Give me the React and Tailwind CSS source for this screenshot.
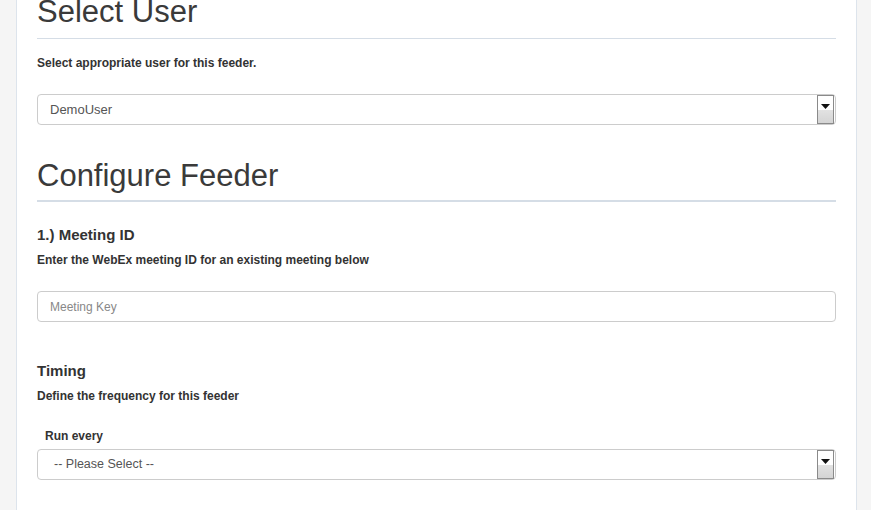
const font = { fontFamily: '"Liberation Sans", Arial, sans-serif' }

function SelectBox({ value, textClass = 'pl-[12px] text-[12.5px]' }) {
  return (
    <div className="h-[31px] border border-[#cccccc] rounded-[4px] bg-white flex items-center justify-between pr-[1px]">
      <span className={`text-[#555555] ${textClass}`}>{value}</span>
      <div className="w-[17px] h-[29px] border border-[#8a8a8a] flex flex-col">
        <div className="h-1/2 bg-white flex items-end justify-center pb-[1px]">
          <svg width="9" height="5" viewBox="0 0 9 5">
            <path d="M0 0h9L4.5 5z" fill="#111" />
          </svg>
        </div>
        <div className="h-1/2 bg-gradient-to-b from-[#e2e2e2] to-[#d4d4d4]" />
      </div>
    </div>
  )
}

export default function App() {
  return (
    <div className="w-[871px] h-[510px] flex overflow-hidden bg-[#f5f5f5]" style={font}>
      <div className="w-[17px] border-r border-[#dde4ec]" />
      <div className="w-[840px] bg-white border-r border-[#dde4ec] px-[20px] text-[#333333]">
        <div className="mt-[-5px] pb-[10px] border-b border-[#d5dde6]">
          <h1 className="text-[31px] leading-[33px] text-[#3a3a3a]">Select User</h1>
        </div>
        <p className="mt-[16px] text-[12px] leading-[17px] font-bold">
          Select appropriate user for this feeder.
        </p>
        <div className="mt-[22px]">
          <SelectBox value="DemoUser" textClass="pl-[12px] text-[13px]" />
        </div>

        <div className="mt-[34px] pb-[8px] border-b-2 border-[#d5dde6]">
          <h1 className="text-[31px] leading-[33px] text-[#3a3a3a]">Configure Feeder</h1>
        </div>

        <h3 className="mt-[23px] text-[15px] leading-[20px] font-bold">1.) Meeting ID</h3>
        <p className="mt-[7px] text-[12px] leading-[17px] font-bold">
          Enter the WebEx meeting ID for an existing meeting below
        </p>
        <div className="mt-[22px] h-[31px] border border-[#cccccc] rounded-[4px] flex items-center pl-[12px]">
          <span className="text-[12px] text-[#888888]">Meeting Key</span>
        </div>

        <h3 className="mt-[39px] text-[15px] leading-[20px] font-bold">Timing</h3>
        <p className="mt-[7px] text-[12px] leading-[17px] font-bold">
          Define the frequency for this feeder
        </p>
        <p className="mt-[23px] pl-[8px] text-[12px] leading-[17px] font-bold">Run every</p>
        <div className="mt-[4px]">
          <SelectBox value="-- Please Select --" textClass="pl-[16px] text-[12.5px]" />
        </div>
      </div>
    </div>
  )
}
